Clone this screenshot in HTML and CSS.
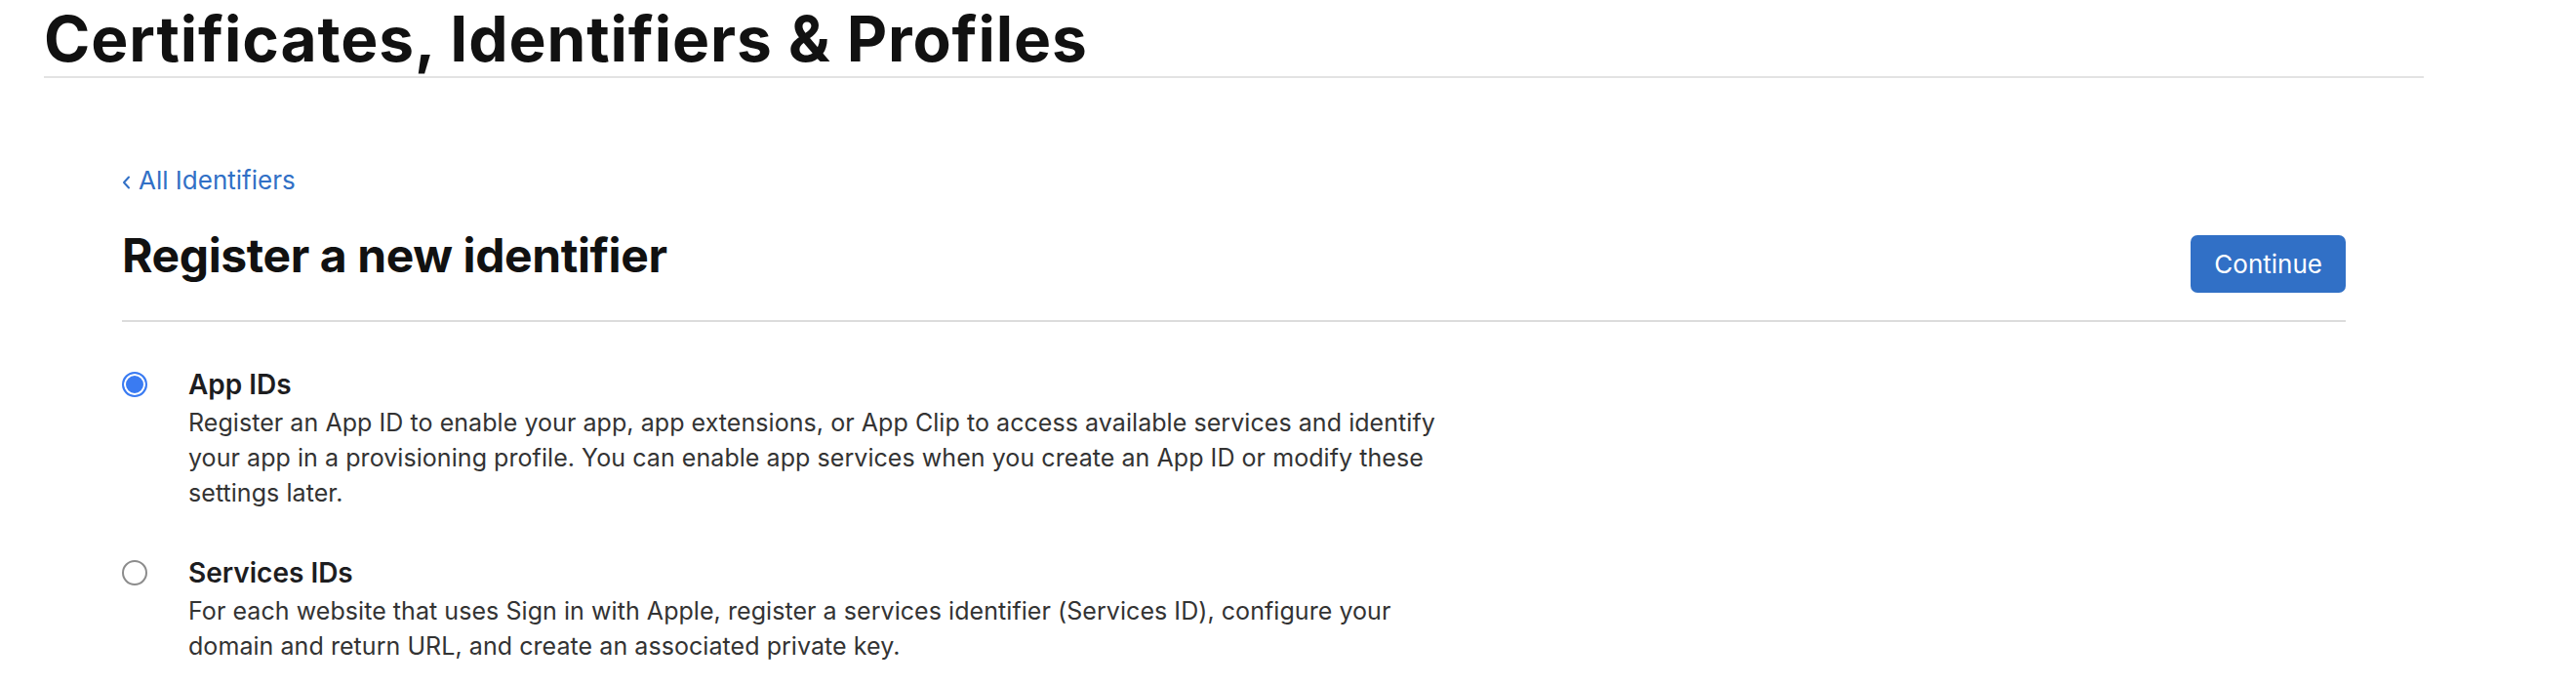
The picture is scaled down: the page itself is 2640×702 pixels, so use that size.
FILE: index.html
```html
<!DOCTYPE html>
<html lang="en">
<head>
    <meta charset="UTF-8">
    <meta name="viewport" content="width=device-width, initial-scale=1.0">
    <title>Certificates, Identifiers &amp; Profiles</title>
    <link rel="stylesheet" href="styles.css">
</head>
<body>
    <div class="page">
        <header class="page-header">
            <h1>Certificates, Identifiers &amp; Profiles</h1>
        </header>

        <main class="content">
            <a class="back-link" href="#">
                <svg class="chevron" width="9" height="14" viewBox="0 0 9 14" aria-hidden="true">
                    <path d="M7 1.5 L2 7 L7 12.5" fill="none" stroke="currentColor" stroke-width="2" stroke-linecap="round" stroke-linejoin="round"/>
                </svg>
                <span>All Identifiers</span>
            </a>

            <div class="title-row">
                <h2>Register a new identifier</h2>
                <button class="btn-primary">Continue</button>
            </div>

            <ul class="id-types">
                <li class="id-type">
                    <input type="radio" name="type" id="type-app" checked>
                    <label for="type-app">
                        <span class="id-name">App IDs</span>
                        <span class="id-desc">Register an App ID to enable your app, app extensions, or App Clip to access available services and identify your app in a provisioning profile. You can enable app services when you create an App ID or modify these settings later.</span>
                    </label>
                </li>
                <li class="id-type">
                    <input type="radio" name="type" id="type-services">
                    <label for="type-services">
                        <span class="id-name">Services IDs</span>
                        <span class="id-desc">For each website that uses Sign in with Apple, register a services identifier (Services ID), configure your domain and return URL, and create an associated private key.</span>
                    </label>
                </li>
            </ul>
        </main>
    </div>
</body>
</html>
```

FILE: styles.css
```css
body {
    margin: 0;
    font-family: Inter, "Noto Sans", sans-serif;
    background-color: #fff;
    color: #1d1d1f;
}
.page {
    margin-left: 45px;
    width: 2439px;
}
.page-header {
    padding-top: 2px;
    border-bottom: 2px solid #e3e3e3;
}
.page-header h1 {
    margin: 0;
    font-size: 64px;
    line-height: 76px;
    font-weight: 700;
    letter-spacing: 0.9px;
    color: #111;
}
.content {
    padding: 88px 80px 0;
}
.back-link {
    display: flex;
    align-items: center;
    gap: 8px;
    font-size: 26px;
    line-height: 34px;
    color: #3170c6;
    text-decoration: none;
}
.back-link .chevron {
    margin-top: 4px;
}
.title-row {
    display: flex;
    justify-content: space-between;
    align-items: flex-start;
    margin-top: 31px;
    padding-bottom: 28px;
    border-bottom: 2px solid #dcdcdc;
}
.title-row h2 {
    margin: 0;
    font-size: 48px;
    line-height: 58px;
    font-weight: 700;
    letter-spacing: -0.4px;
    color: #111;
}
.btn-primary {
    margin-top: 8px;
    height: 59px;
    padding: 0 24px;
    border: none;
    border-radius: 7px;
    background-color: #3170c6;
    color: #fff;
    font-family: inherit;
    font-size: 26px;
    cursor: pointer;
}
.id-types {
    list-style: none;
    margin: 46px 0 0;
    padding: 0;
}
.id-type {
    display: flex;
    align-items: flex-start;
    margin-bottom: 46px;
}
.id-type input[type="radio"] {
    appearance: none;
    -webkit-appearance: none;
    flex: none;
    width: 26px;
    height: 26px;
    margin: 5px 42px 0 0;
    border: 2px solid #8c8c8c;
    border-radius: 50%;
    background-color: #fff;
}
.id-type input[type="radio"]:checked {
    border: 2px solid #3a7bf2;
    background-color: #3a7bf2;
    box-shadow: inset 0 0 0 2px #fff;
}
.id-type label {
    display: block;
    max-width: 1305px;
}
.id-name {
    display: block;
    margin-bottom: 3px;
    font-size: 28px;
    line-height: 36px;
    font-weight: 600;
    color: #1d1d1f;
}
.id-desc {
    display: block;
    font-size: 25px;
    line-height: 36px;
    letter-spacing: 0.06px;
    color: #333;
}
```
